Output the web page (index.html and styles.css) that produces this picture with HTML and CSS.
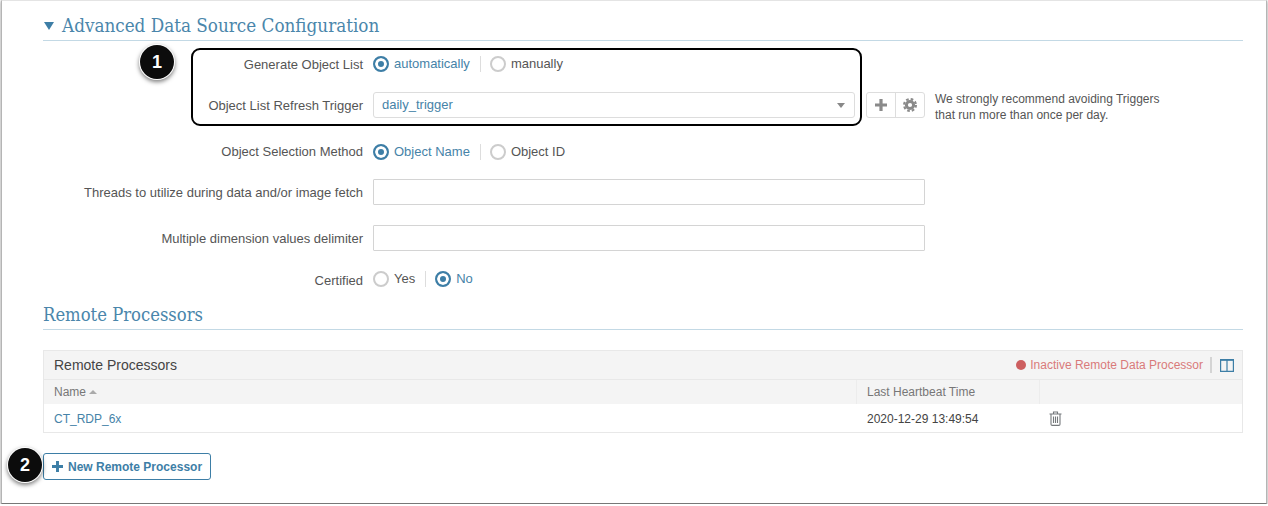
FILE: index.html
```html
<!DOCTYPE html>
<html>
<head>
<meta charset="utf-8">
<title>Advanced Data Source Configuration</title>
<link rel="stylesheet" href="styles.css">
</head>
<body>
<div class="window">

  <h2 class="section_title section_first"><span class="caret"></span>Advanced Data Source Configuration</h2>

  <div class="form">
    <div class="row row_short">
      <label class="row_label">Generate Object List</label>
      <div class="radio_group">
        <span class="radio radio_on"><i></i>automatically</span>
        <span class="radio_sep"></span>
        <span class="radio"><i></i>manually</span>
      </div>
    </div>
    <div class="row">
      <label class="row_label">Object List Refresh Trigger</label>
      <div class="select">daily_trigger<span class="select_arrow"></span></div>
      <div class="btn_pair">
        <span class="btn_square">
          <svg width="12" height="12" viewBox="0 0 12 12"><path d="M4.4 0h3.2v4.4H12v3.2H7.6V12H4.4V7.6H0V4.4h4.4z" fill="#8a8a8a"/></svg>
        </span>
        <span class="btn_square">
          <svg width="14" height="14" viewBox="0 0 14 14"><circle cx="7" cy="7" r="3.6" fill="none" stroke="#8a8a8a" stroke-width="3"/><circle cx="7" cy="7" r="5.9" fill="none" stroke="#8a8a8a" stroke-width="2.2" stroke-dasharray="2.6 2.03"/></svg>
        </span>
      </div>
      <p class="hint">We strongly recommend avoiding Triggers<br>that run more than once per day.</p>
    </div>
    <div class="row row_short">
      <label class="row_label">Object Selection Method</label>
      <div class="radio_group radio_group_low">
        <span class="radio radio_on"><i></i>Object Name</span>
        <span class="radio_sep"></span>
        <span class="radio"><i></i>Object ID</span>
      </div>
    </div>
    <div class="row">
      <label class="row_label">Threads to utilize during data and/or image fetch</label>
      <input class="text_input" type="text">
    </div>
    <div class="row row_short">
      <label class="row_label">Multiple dimension values delimiter</label>
      <input class="text_input" type="text">
    </div>
    <div class="row row_last">
      <label class="row_label label_low">Certified</label>
      <div class="radio_group">
        <span class="radio"><i></i>Yes</span>
        <span class="radio_sep"></span>
        <span class="radio radio_on"><i></i>No</span>
      </div>
    </div>

    <div class="highlight"></div>
    <div class="badge badge_one">1</div>
  </div>

  <h2 class="section_title section_second">Remote Processors</h2>

  <div class="panel">
    <div class="panel_head">
      <span class="panel_title">Remote Processors</span>
      <span class="status_dot"></span>
      <span class="status_text">Inactive Remote Data Processor</span>
      <span class="panel_sep"></span>
      <svg class="columns_icon" width="14" height="13" viewBox="0 0 14 13"><path d="M.6.6h12.8v11.8H.6zM7 .6v11.8" fill="none" stroke="#3d7ea6" stroke-width="1.2"/><path d="M.6.6h12.8v1.2H.6z" fill="#3d7ea6"/></svg>
    </div>
    <div class="table_row table_head">
      <div class="cell_name">Name<span class="sort_arrow"></span></div>
      <div class="cell_time">Last Heartbeat Time</div>
      <div class="cell_action"></div>
    </div>
    <div class="table_row table_data">
      <div class="cell_name"><a class="link">CT_RDP_6x</a></div>
      <div class="cell_time time_value">2020-12-29 13:49:54</div>
      <div class="cell_action">
        <svg width="13" height="15" viewBox="0 0 13 15"><path d="M.5 3h12M4.5 3V1h4v2M2 3v10.2c0 .7.5 1.2 1.2 1.2h6.6c.7 0 1.2-.5 1.2-1.2V3M4.5 5.5v6.5M6.5 5.5v6.5M8.5 5.5v6.5" fill="none" stroke="#75797c" stroke-width="1.1"/></svg>
      </div>
    </div>
  </div>

  <div class="footer">
    <button class="new_btn"><svg width="11" height="11" viewBox="0 0 12 12"><path d="M4.4 0h3.2v4.4H12v3.2H7.6V12H4.4V7.6H0V4.4h4.4z" fill="#3d7ea6"/></svg>New Remote Processor</button>
    <div class="badge badge_two">2</div>
  </div>

</div>
</body>
</html>
```

FILE: styles.css
```css
body{
  margin: 0;
  background-color: #fff;
  font-family: "Liberation Sans", Arial, sans-serif;
  font-size: 13px;
  color: #555;
}

.window{
  box-sizing: border-box;
  width: 1266px;
  height: 504px;
  margin-left: 1px;
  padding: 0 23px 0 41px;
  border-top: 1px solid #e4e4e4;
  border-left: 1px solid #b5b5b5;
  border-right: 1px solid #b5b5b5;
  border-bottom: 1px solid #777;
  box-shadow: 0 1px 3px rgba(0,0,0,.45);
}

.section_title{
  margin: 0;
  font-family: "DejaVu Serif", serif;
  font-stretch: condensed;
  font-weight: normal;
  color: #4a86ab;
  border-bottom: 1px solid #c3d9e5;
}
.section_first{
  height: 40px;
  padding-top: 13px;
  box-sizing: border-box;
  display: flex;
  align-items: center;
  font-size: 18.7px;
  line-height: 24px;
  padding-bottom: 2px;
}
.section_second{
  box-sizing: border-box;
  height: 27px;
  font-size: 18.3px;
  line-height: 24px;
}
.caret{
  width: 0;
  height: 0;
  margin: 0 8px 0 1px;
  border-left: 5px solid transparent;
  border-right: 5px solid transparent;
  border-top: 8px solid #3d7ea6;
}

.form{
  position: relative;
  padding-top: 10px;
}
.row{
  display: flex;
  align-items: center;
  height: 26px;
  margin-bottom: 20px;
}
.row_short{
  margin-bottom: 15px;
}
.row_last{
  margin-bottom: 11px;
}
.row_label{
  flex: none;
  width: 320px;
  margin-right: 10px;
  text-align: right;
}
.label_low{
  padding-top: 2px;
}

.radio_group{
  display: flex;
  align-items: center;
}
.radio_group_low{
  padding-top: 2px;
}
.radio{
  display: flex;
  align-items: center;
  padding-bottom: 2px;
  color: #555;
}
.radio i{
  box-sizing: border-box;
  width: 16px;
  height: 16px;
  margin-top: 2px;
  margin-right: 5px;
  border: 2px solid #ccc;
  border-radius: 50%;
}
.radio_on{
  color: #4683a8;
}
.radio_on i{
  border-color: #3d7ea6;
  background-color: #3d7ea6;
  box-shadow: inset 0 0 0 3px #fff;
}
.radio_sep{
  width: 1px;
  height: 16px;
  margin: 0 9px 0 10px;
  background-color: #ddd;
}

.select{
  position: relative;
  box-sizing: border-box;
  width: 482px;
  height: 26px;
  padding-left: 8px;
  line-height: 24px;
  color: #4683a8;
  background-color: #fff;
  border: 1px solid #ddd;
  border-radius: 3px;
}
.select_arrow{
  position: absolute;
  right: 9px;
  top: 10px;
  border-left: 4.5px solid transparent;
  border-right: 4.5px solid transparent;
  border-top: 5px solid #888;
}
.btn_pair{
  display: flex;
  height: 26px;
  margin-left: 11px;
  box-sizing: border-box;
  border: 1px solid #ddd;
  border-radius: 3px;
}
.btn_square{
  display: flex;
  align-items: center;
  justify-content: center;
  width: 28px;
}
.btn_square + .btn_square{
  border-left: 1px solid #ddd;
}
.hint{
  margin: 0 0 0 10px;
  padding-top: 4px;
  font-size: 12px;
  line-height: 16px;
  color: #555;
}
.text_input{
  box-sizing: border-box;
  width: 552px;
  height: 26px;
  margin: 0;
  padding: 0 8px;
  background-color: #fff;
  border: 1px solid #d4d4d4;
  border-radius: 1px;
}

.highlight{
  position: absolute;
  left: 148px;
  top: 7px;
  width: 667px;
  height: 74px;
  border: 2px solid #000;
  border-radius: 9px;
}
.badge{
  position: absolute;
  width: 34px;
  height: 34px;
  font-size: 18px;
  font-weight: bold;
  line-height: 34px;
  text-align: center;
  color: #fff;
  background-color: #0c0c0c;
  border-radius: 50%;
  box-shadow: 0 0 0 1px #fff, 0 2px 4px 1px rgba(0,0,0,.5);
}
.badge_one{
  left: 97px;
  top: 4px;
}
.badge_two{
  left: -35px;
  top: -5px;
}

.panel{
  margin-top: 20px;
  border: 1px solid #e8e8e8;
}
.panel_head{
  display: flex;
  align-items: center;
  height: 28px;
  padding: 0 8px 0 10px;
  background-color: #f4f4f4;
  border-bottom: 1px solid #e8e8e8;
}
.panel_title{
  flex: 1;
  font-size: 14px;
  color: #444;
}
.status_dot{
  width: 10px;
  height: 10px;
  margin-right: 4px;
  background-color: #cd5f60;
  border-radius: 50%;
}
.status_text{
  font-size: 12px;
  color: #d97a7a;
}
.panel_sep{
  width: 2px;
  height: 16px;
  margin: 0 8px 0 7px;
  background-color: #d4d4d4;
}
.columns_icon{
  display: block;
}

.table_row{
  display: flex;
  height: 28px;
  align-items: center;
  font-size: 12px;
}
.table_head{
  height: 24px;
  color: #777;
  background-color: #f4f4f4;
}
.table_data{
  box-sizing: border-box;
  padding-top: 2px;
}
.table_data svg{
  display: block;
  margin-top: -2px;
}
.cell_name{
  box-sizing: border-box;
  width: 812px;
  padding-left: 10px;
}
.cell_time{
  box-sizing: border-box;
  width: 183px;
  height: 100%;
  padding-left: 10px;
  display: flex;
  align-items: center;
  border-left: 1px solid #ececec;
}
.cell_action{
  padding-left: 10px;
}
.table_head .cell_action{
  height: 100%;
  border-left: 1px solid #ececec;
}
.time_value{
  color: #444;
  border-left: 0;
  padding-left: 11px;
}
.link{
  color: #4683a8;
}
.sort_arrow{
  display: inline-block;
  margin-left: 3px;
  vertical-align: 2px;
  border-left: 4px solid transparent;
  border-right: 4px solid transparent;
  border-bottom: 4px solid #aaa;
}

.footer{
  position: relative;
  margin-top: 20px;
}
.new_btn{
  display: flex;
  align-items: center;
  gap: 5px;
  box-sizing: border-box;
  width: 168px;
  height: 27px;
  padding: 0 8px;
  font-family: "Liberation Sans", Arial, sans-serif;
  font-size: 12px;
  font-weight: bold;
  white-space: nowrap;
  color: #3d7ea6;
  background-color: #fff;
  border: 1px solid #3d7ea6;
  border-radius: 3px;
}
.new_btn svg{
  flex: none;
}
```
